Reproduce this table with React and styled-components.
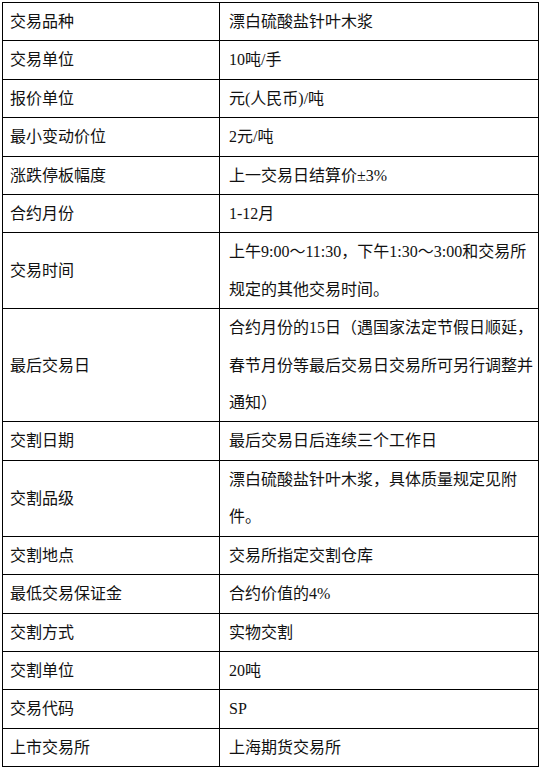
import React from "react";
import styled, { createGlobalStyle } from "styled-components";

const GlobalStyle = createGlobalStyle`
  html, body {
    margin: 0;
    padding: 0;
    background: #fff;
  }
`;

const Page = styled.div`
  padding: 2px 0 0 2px;
  font-family: "Liberation Serif", "Noto Sans CJK SC", serif;
  font-size: 16px;
  color: #111;
`;

const Table = styled.table`
  width: 537px;
  border-collapse: collapse;
  table-layout: fixed;
`;

const LabelCell = styled.td`
  width: 205px;
  border: 1px solid #000;
  padding: 0 4px 0 7px;
  line-height: 37.4px;
  vertical-align: middle;
  white-space: nowrap;
`;

const ValueCell = styled.td`
  border: 1px solid #000;
  padding: 0 2px 0 9px;
  line-height: 37.4px;
  vertical-align: top;
  white-space: nowrap;
`;

const rows = [
  { label: "交易品种", value: ["漂白硫酸盐针叶木浆"] },
  { label: "交易单位", value: ["10吨/手"] },
  { label: "报价单位", value: ["元(人民币)/吨"] },
  { label: "最小变动价位", value: ["2元/吨"] },
  { label: "涨跌停板幅度", value: ["上一交易日结算价±3%"] },
  { label: "合约月份", value: ["1-12月"] },
  {
    label: "交易时间",
    value: ["上午9:00～11:30，下午1:30～3:00和交易所", "规定的其他交易时间。"],
  },
  {
    label: "最后交易日",
    value: [
      "合约月份的15日（遇国家法定节假日顺延，",
      "春节月份等最后交易日交易所可另行调整并",
      "通知）",
    ],
  },
  { label: "交割日期", value: ["最后交易日后连续三个工作日"] },
  {
    label: "交割品级",
    value: ["漂白硫酸盐针叶木浆，具体质量规定见附", "件。"],
  },
  { label: "交割地点", value: ["交易所指定交割仓库"] },
  { label: "最低交易保证金", value: ["合约价值的4%"] },
  { label: "交割方式", value: ["实物交割"] },
  { label: "交割单位", value: ["20吨"] },
  { label: "交易代码", value: ["SP"] },
  { label: "上市交易所", value: ["上海期货交易所"] },
];

const App = () => {
  return (
    <>
      <GlobalStyle />
      <Page>
        <Table>
          <tbody>
            {rows.map((row) => (
              <tr key={row.label}>
                <LabelCell>{row.label}</LabelCell>
                <ValueCell>
                  {row.value.map((line, i) => (
                    <React.Fragment key={i}>
                      {i > 0 && <br />}
                      {line}
                    </React.Fragment>
                  ))}
                </ValueCell>
              </tr>
            ))}
          </tbody>
        </Table>
      </Page>
    </>
  );
};

export default App;
